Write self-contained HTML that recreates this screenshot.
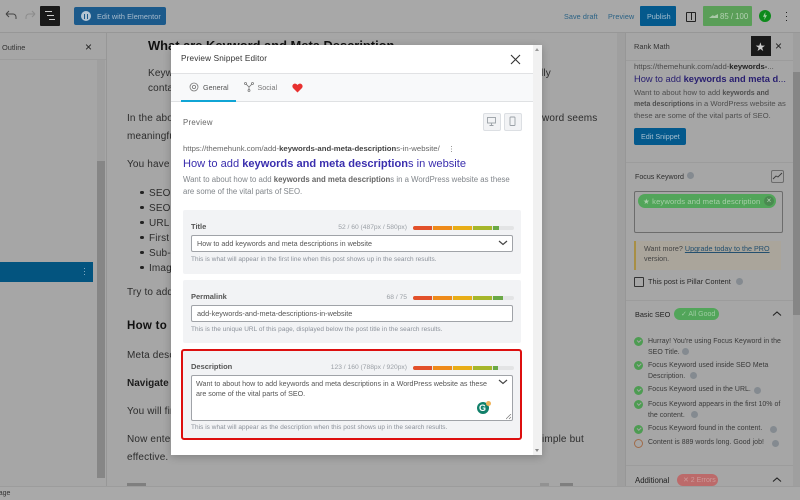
<!DOCTYPE html>
<html><head><meta charset="utf-8">
<style>
html,body{margin:0;padding:0;width:800px;height:500px;overflow:hidden;background:#a6a6a6;font-family:"Liberation Sans",sans-serif;}
.a{position:absolute;white-space:nowrap;}
#r{position:relative;width:800px;height:500px;overflow:hidden;}
.b{font-size:10px;color:#2c2c2c;letter-spacing:.15px;}
.s{font-size:6.95px;color:#3a3a3a;letter-spacing:.05px;}
.dot{position:absolute;width:9px;height:9px;border-radius:50%;background:#4d9c52;}
.dot:after{content:"";position:absolute;left:2.5px;top:2px;width:3px;height:1.6px;border-left:1.2px solid #a6a6a6;border-bottom:1.2px solid #a6a6a6;transform:rotate(-45deg);}
.q{position:absolute;width:7px;height:7px;border-radius:50%;background:#848a90;}
.panel{position:absolute;left:183px;width:338px;background:#f2f3f5;border-radius:2px;}
.lab{font-size:7.5px;font-weight:bold;color:#555;}
.inp{position:absolute;left:191px;width:320px;background:#fff;border:1px solid #a0a3a8;border-radius:2px;font-size:7.2px;color:#555;}
.hint{font-size:6.45px;color:#8a9099;letter-spacing:.05px;}
.bar{position:absolute;left:413px;width:101px;height:4px;background:#e3e4e5;border-radius:2px;overflow:hidden;}
.bar i{position:absolute;top:0;height:4px;}
.cnt{font-size:6.7px;color:#9a9fa5;text-align:right;}
</style></head><body><div id="r">

<!-- toolbar -->
<div class="a" style="left:0;top:0;width:800px;height:32px;background:#a8a8a8;border-bottom:1px solid #979797;"></div>
<svg class="a" style="left:4px;top:9px" width="14" height="14" fill="none" stroke-width="1"><path d="M2 5h7a3 3 0 0 1 3 3v2M2 5l3-3M2 5l3 3" stroke="#444"/></svg>
<svg class="a" style="left:25px;top:9px" width="12" height="14" fill="none" stroke-width="1"><path d="M10 5H4a3 3 0 0 0-3 3v2M10 5L7 2M10 5L7 8" stroke="#8c8c8c"/></svg>
<div class="a" style="left:40px;top:6px;width:20px;height:20px;background:#1a1a1a;border-radius:1px;"></div>
<div class="a" style="left:45px;top:11px;width:7px;height:1.4px;background:#ccc;"></div>
<div class="a" style="left:47px;top:15px;width:7px;height:1.4px;background:#ccc;"></div>
<div class="a" style="left:49px;top:19px;width:6px;height:1.4px;background:#ccc;"></div>
<div class="a" style="left:74px;top:7px;width:92px;height:18px;background:#1c5a8b;border-radius:2px;"></div>
<div class="a" style="left:81px;top:11px;width:10px;height:10px;border-radius:50%;background:#b5c4d2;"></div>
<div class="a" style="left:83.5px;top:13.5px;width:1.5px;height:5px;background:#1c5a8b;box-shadow:3px 0 0 #1c5a8b;"></div>
<div class="a" style="left:97px;top:12px;font-size:7.3px;color:#a9bccd;letter-spacing:.05px;">Edit with Elementor</div>
<div class="a" style="left:564px;top:12px;font-size:7.2px;color:#2a6285;letter-spacing:.1px;">Save draft</div>
<div class="a" style="left:608px;top:12px;font-size:7.2px;color:#2a6285;letter-spacing:.1px;">Preview</div>
<div class="a" style="left:640px;top:6px;width:36px;height:20px;background:#04598c;border-radius:1px;"></div>
<div class="a" style="left:647px;top:12px;font-size:7.2px;color:#a6bfd0;">Publish</div>
<div class="a" style="left:686px;top:12px;width:8px;height:8px;border:1px solid #222;border-radius:1px;"></div>
<div class="a" style="left:691px;top:12px;width:1px;height:8px;background:#222;"></div>
<div class="a" style="left:703px;top:6px;width:49px;height:20px;background:#5a9e58;border-radius:1px;"></div>
<div class="a" style="left:709px;top:14px;width:9px;height:4px;background:#a9c9a8;clip-path:polygon(0 100%,40% 30%,60% 50%,100% 0,100% 100%);"></div>
<div class="a" style="left:720px;top:12px;font-size:7.8px;color:#b4d2b3;">85 / 100</div>
<div class="a" style="left:759px;top:10px;width:12px;height:12px;border-radius:50%;background:#0e8a1c;"></div>
<div class="a" style="left:763px;top:12px;width:4px;height:8px;background:#a8d0a8;clip-path:polygon(60% 0,0 60%,45% 60%,30% 100%,100% 40%,55% 40%);"></div>
<div class="a" style="left:786px;top:12px;width:1.4px;height:1.4px;background:#222;box-shadow:0 4px 0 #222,0 8px 0 #222;"></div>

<!-- Outline sidebar -->
<div class="a" style="left:0;top:33px;width:106px;height:453px;background:#a6a6a6;border-right:1px solid #979797;"></div>
<div class="a" style="left:0;top:59px;width:106px;height:1px;background:#9c9c9c;"></div>
<div class="a" style="left:2px;top:43px;font-size:7.4px;color:#333;">Outline</div>
<div class="a" style="left:85px;top:40px;font-size:12px;color:#222;">×</div>
<div class="a" style="left:97px;top:60px;width:8px;height:418px;background:#9f9f9f;"></div>
<div class="a" style="left:97px;top:161px;width:8px;height:317px;background:#868686;"></div>
<div class="a" style="left:0;top:262px;width:93px;height:20px;background:#03547f;"></div>
<div class="a" style="left:83.5px;top:268px;width:1.2px;height:1.2px;background:#7fa8c0;box-shadow:0 3px 0 #7fa8c0,0 6px 0 #7fa8c0;"></div>

<!-- Content -->
<div class="a" style="left:148px;top:38px;font-size:12.9px;font-weight:bold;color:#111;">What are Keyword and Meta Description</div>
<div class="a b" style="left:148px;top:68px;">Keywo</div>
<div class="a b" style="left:148px;top:83px;">contai</div>
<div class="a b" style="left:541px;top:68px;">lly</div>
<div class="a b" style="left:127px;top:113px;">In the abo</div>
<div class="a b" style="left:542px;top:113px;">word seems</div>
<div class="a b" style="left:127px;top:131px;">meaningfu</div>
<div class="a b" style="left:127px;top:159px;">You have t</div>
<div class="a b" style="left:149px;top:186px;line-height:15px;white-space:pre;">SEO T
SEO I
URL
First
Sub-I
Imag</div>
<div class="a" style="left:140px;top:190.5px;width:3.5px;height:3.5px;border-radius:50%;background:#222;box-shadow:0 15px 0 #222,0 30px 0 #222,0 45px 0 #222,0 60px 0 #222,0 75px 0 #222;"></div>
<div class="a b" style="left:127px;top:287px;">Try to add</div>
<div class="a" style="left:127px;top:320px;font-size:11.5px;font-weight:bold;color:#111;letter-spacing:.3px;">How to</div>
<div class="a b" style="left:127px;top:350px;">Meta desc</div>
<div class="a" style="left:127px;top:378px;font-size:10px;font-weight:bold;color:#1c1c1c;">Navigate</div>
<div class="a b" style="left:127px;top:406px;">You will fin</div>
<div class="a b" style="left:127px;top:434px;">Now ente</div>
<div class="a b" style="left:542px;top:434px;">imple but</div>
<div class="a b" style="left:127px;top:452px;">effective.</div>
<div class="a" style="left:127px;top:483px;width:19px;height:3px;background:#7f7f7f;"></div>
<div class="a" style="left:540px;top:483px;width:9px;height:3px;background:#929292;"></div>
<div class="a" style="left:560px;top:483px;width:13px;height:3px;background:#7f7f7f;"></div>
<div class="a" style="left:617px;top:33px;width:8px;height:453px;background:#9f9f9f;"></div>

<!-- Status -->
<div class="a" style="left:0;top:486px;width:800px;height:14px;background:#a9a9a9;border-top:1px solid #9c9c9c;box-sizing:border-box;"></div>
<div class="a" style="left:-9px;top:490px;font-size:7px;color:#333;">Image</div>

<!-- Rank Math sidebar -->
<div class="a" style="left:625px;top:33px;width:175px;height:453px;background:#a6a6a6;border-left:1px solid #979797;box-sizing:border-box;"></div>
<div class="a" style="left:793px;top:33px;width:7px;height:453px;background:#9f9f9f;"></div>
<div class="a" style="left:793px;top:72px;width:7px;height:243px;background:#868686;"></div>
<div class="a" style="left:626px;top:60px;width:167px;height:1px;background:#9c9c9c;"></div>
<div class="a" style="left:634px;top:42px;font-size:7.4px;color:#333;">Rank Math</div>
<div class="a" style="left:751px;top:36px;width:20px;height:20px;background:#1a1a1a;"></div>
<div class="a" style="left:755px;top:39.5px;font-size:12px;color:#ccc;">★</div>
<div class="a" style="left:775px;top:39px;font-size:12px;color:#222;">×</div>
<div class="a" style="left:634px;top:62px;font-size:7.7px;color:#4a4a4a;">https://themehunk.com/add-<b style="color:#222">keywords-</b>...</div>
<div class="a" style="left:634px;top:74px;font-size:9.3px;color:#281e70;">How to add <b>keywords and meta d</b>...</div>
<div class="a" style="left:634px;top:88px;font-size:7.6px;line-height:10.4px;color:#4e4e4e;">Want to about how to add <b style="font-size:7px">keywords and</b><br><b style="font-size:7px">meta descriptions</b> in a WordPress website as<br>these are some of the vital parts of SEO.</div>
<div class="a" style="left:634px;top:128px;width:52px;height:17px;background:#04598c;border-radius:2px;"></div>
<div class="a" style="left:641px;top:132px;font-size:7.2px;color:#a6bfd0;">Edit Snippet</div>
<div class="a" style="left:626px;top:162px;width:167px;height:1px;background:#9c9c9c;"></div>
<div class="a" style="left:635px;top:173px;font-size:7.1px;color:#2e2e2e;">Focus Keyword</div>
<div class="q" style="left:687px;top:172px;"></div>
<div class="a" style="left:771px;top:170px;width:11px;height:11px;border:1px solid #6c6c6c;border-radius:2px;"></div>
<svg class="a" style="left:772px;top:171px" width="11" height="11" fill="none"><path d="M1 8l3-3 2 1 4-4" stroke="#3a3a3a" stroke-width=".9"/></svg>
<div class="a" style="left:634px;top:191px;width:147px;height:40px;border:1px solid #6c6c6c;border-radius:2px;"></div>
<div class="a" style="left:638px;top:194px;width:138px;height:14px;background:#52a55a;border-radius:7px;"></div>
<div class="a" style="left:643px;top:196.5px;font-size:7.6px;color:#a7cfa9;letter-spacing:.12px;">★ keywords and meta description</div>
<div class="a" style="left:764px;top:196px;width:10px;height:10px;border-radius:50%;background:#4a8a50;font-size:8px;line-height:9px;text-align:center;color:#bcd5bd;">×</div>
<div class="a" style="left:634px;top:241px;width:147px;height:29px;background:#aaa59b;"></div>
<div class="a" style="left:634px;top:241px;width:2px;height:29px;background:#a88f45;"></div>
<div class="a" style="left:644px;top:244px;font-size:7.2px;line-height:10px;color:#444;">Want more? <u style="color:#24506f">Upgrade today to the PRO</u><br>version.</div>
<div class="a" style="left:634px;top:277px;width:8px;height:8px;border:1px solid #333;border-radius:1px;"></div>
<div class="a" style="left:648px;top:277px;font-size:7.3px;color:#2a2a2a;">This post is Pillar Content</div>
<div class="q" style="left:736px;top:278px;"></div>
<div class="a" style="left:626px;top:300px;width:167px;height:1px;background:#9c9c9c;"></div>
<div class="a" style="left:635px;top:310px;font-size:7.3px;color:#222;">Basic SEO</div>
<div class="a" style="left:674px;top:308px;width:45px;height:12px;border-radius:6px;background:#52a55a;"></div>
<div class="a" style="left:681px;top:310px;font-size:7px;color:#9fcca3;">✓ All Good</div>
<svg class="a" style="left:772px;top:311px" width="10" height="6" fill="none"><path d="M1 4.5L5 1l4 3.5" stroke="#222" stroke-width="1.1"/></svg>

<div class="dot" style="left:634px;top:337px;"></div>
<div class="a s" style="left:648px;top:337px;line-height:10.5px;">Hurray! You're using Focus Keyword in the<br>SEO Title.</div>
<div class="q" style="left:682px;top:348px;"></div>
<div class="dot" style="left:634px;top:361px;"></div>
<div class="a s" style="left:648px;top:361px;line-height:10.5px;">Focus Keyword used inside SEO Meta<br>Description.</div>
<div class="q" style="left:690px;top:372px;"></div>
<div class="dot" style="left:634px;top:386px;"></div>
<div class="a s" style="left:648px;top:386px;">Focus Keyword used in the URL.</div>
<div class="q" style="left:754px;top:387px;"></div>
<div class="dot" style="left:634px;top:400px;"></div>
<div class="a s" style="left:648px;top:400px;line-height:10.5px;">Focus Keyword appears in the first 10% of<br>the content.</div>
<div class="q" style="left:691px;top:411px;"></div>
<div class="dot" style="left:634px;top:425px;"></div>
<div class="a s" style="left:648px;top:425px;">Focus Keyword found in the content.</div>
<div class="q" style="left:770px;top:426px;"></div>
<div class="a" style="left:634px;top:439px;width:7px;height:7px;border:1px solid #a06b48;border-radius:50%;"></div>
<div class="a s" style="left:648px;top:439px;">Content is 889 words long. Good job!</div>
<div class="q" style="left:772px;top:440px;"></div>
<div class="a" style="left:626px;top:465px;width:167px;height:1px;background:#9c9c9c;"></div>
<div class="a" style="left:635px;top:476px;font-size:7.8px;color:#222;">Additional</div>
<div class="a" style="left:677px;top:474px;width:41px;height:12px;border-radius:6px;background:#bc6a6a;"></div>
<div class="a" style="left:683px;top:476px;font-size:7px;color:#cc9a9a;">✕ 2 Errors</div>
<svg class="a" style="left:772px;top:477px" width="10" height="6" fill="none"><path d="M1 4.5L5 1l4 3.5" stroke="#222" stroke-width="1.1"/></svg>

<!-- Modal -->
<div class="a" style="left:171px;top:45px;width:371px;height:410px;background:#fff;box-shadow:0 2px 8px rgba(0,0,0,.22);"></div>
<div class="a" style="left:533px;top:45px;width:9px;height:410px;background:#f1f1f1;"></div>
<div class="a" style="left:171px;top:73px;width:362px;height:1px;background:#e1e2e4;"></div>
<div class="a" style="left:181px;top:54px;font-size:8.2px;color:#333;letter-spacing:.15px;">Preview Snippet Editor</div>
<svg class="a" style="left:510px;top:54px" width="11" height="11" fill="none"><path d="M1 1l9 9M10 1l-9 9" stroke="#333" stroke-width="1.1"/></svg>
<div class="a" style="left:171px;top:74px;width:362px;height:27px;background:#f8f9fa;border-bottom:1px solid #dfe1e3;"></div>
<div class="a" style="left:181px;top:100px;width:55px;height:2px;background:#10a5d5;"></div>
<svg class="a" style="left:189px;top:82px" width="10" height="10" fill="none" stroke="#777" stroke-width=".8"><circle cx="5" cy="5" r="1.6"/><circle cx="5" cy="5" r="4"/></svg>
<div class="a" style="left:203px;top:83px;font-size:7.2px;color:#555;">General</div>
<svg class="a" style="left:244px;top:82px" width="10" height="10" fill="none" stroke="#777" stroke-width=".8"><circle cx="1.5" cy="1.5" r="1"/><circle cx="8.5" cy="1.5" r="1"/><circle cx="5" cy="8.5" r="1"/><path d="M2 2l3 3 3-3M5 5v3"/></svg>
<div class="a" style="left:257.5px;top:83px;font-size:7.2px;color:#777;">Social</div>
<svg class="a" style="left:292px;top:82.5px" width="11" height="10"><path d="M5.5 9.5L1 5C-.5 3 1 .5 3 .6c1.2 0 2 .7 2.5 1.500C6 1.300 6.800.6 8 .6c2 0 3.500 2.400 2 4.400z" fill="#e8312f"/></svg>
<div class="a" style="left:183px;top:118px;font-size:7.8px;color:#666;letter-spacing:.3px;">Preview</div>
<div class="a" style="left:483px;top:113px;width:16px;height:16px;background:#f2f3f5;border:1px solid #dcdfe3;border-radius:2px;"></div>
<div class="a" style="left:504px;top:113px;width:16px;height:16px;background:#f2f3f5;border:1px solid #dcdfe3;border-radius:2px;"></div>
<svg class="a" style="left:486px;top:116px" width="12" height="12" fill="none" stroke="#9aa0a6" stroke-width=".9"><rect x="1.500" y="1.500" width="8" height="5.500"/><path d="M3.500 9.500h4M5.500 7v2.500"/></svg>
<svg class="a" style="left:509px;top:116px" width="8" height="11" fill="none" stroke="#9aa0a6" stroke-width=".9"><rect x="1" y="1" width="5" height="8.500" rx=".8"/></svg>
<div class="a" style="left:183px;top:144px;font-size:7.75px;color:#666;">https://themehunk.com/add-<b style="color:#444">keywords-and-meta-description</b>s-in-website/</div>
<div class="a" style="left:451px;top:146px;width:1.2px;height:1.2px;background:#999;box-shadow:0 2.500px 0 #999,0 5px 0 #999;"></div>
<div class="a" style="left:183px;top:158px;font-size:11.1px;color:#3a2eae;">How to add <b>keywords and meta description</b>s in website</div>
<div class="a" style="left:183px;top:174px;font-size:7.8px;line-height:12px;color:#80858a;">Want to about how to add <b style="color:#666">keywords and meta description</b>s in a WordPress website as these<br>are some of the vital parts of SEO.</div>

<!-- Title -->
<div class="panel" style="top:210px;height:64px;"></div>
<div class="a lab" style="left:191px;top:222px;">Title</div>
<div class="a cnt" style="left:300px;width:107px;top:224px;">52 / 60 (487px / 580px)</div>
<div class="bar" style="top:226px;"><i style="left:0;width:19px;background:#e2502a"></i><i style="left:20px;width:19px;background:#ee8a1a"></i><i style="left:40px;width:19px;background:#e8ad17"></i><i style="left:60px;width:19px;background:#a6b62a"></i><i style="left:80px;width:6px;background:#6aa845"></i></div>
<div class="inp" style="top:235px;height:15px;padding:0;line-height:15px;text-indent:5px;">How to add keywords and meta descriptions in website</div>
<svg class="a" style="left:498px;top:240px" width="10" height="6" fill="none"><path d="M1 1l4 3.500L9 1" stroke="#444" stroke-width="1.200"/></svg>
<div class="a hint" style="left:191px;top:256px;">This is what will appear in the first line when this post shows up in the search results.</div>

<!-- Permalink -->
<div class="panel" style="top:280px;height:63px;"></div>
<div class="a lab" style="left:191px;top:292px;">Permalink</div>
<div class="a cnt" style="left:300px;width:107px;top:293.500px;">68 / 75</div>
<div class="bar" style="top:296px;"><i style="left:0;width:19px;background:#e2502a"></i><i style="left:20px;width:19px;background:#ee8a1a"></i><i style="left:40px;width:19px;background:#e8ad17"></i><i style="left:60px;width:19px;background:#a6b62a"></i><i style="left:80px;width:10px;background:#6aa845"></i></div>
<div class="inp" style="top:305px;height:15px;line-height:15px;text-indent:5px;font-size:7.3px;">add-keywords-and-meta-descriptions-in-website</div>
<div class="a hint" style="left:191px;top:326px;">This is the unique URL of this page, displayed below the post title in the search results.</div>

<!-- Description -->
<div class="a" style="left:181px;top:349px;width:337px;height:87px;background:#f2f3f5;border:2px solid #dd0f0f;border-radius:3px;"></div>
<div class="a lab" style="left:191px;top:362px;">Description</div>
<div class="a cnt" style="left:280px;width:127px;top:364px;">123 / 160 (788px / 920px)</div>
<div class="bar" style="top:366px;"><i style="left:0;width:19px;background:#e2502a"></i><i style="left:20px;width:19px;background:#ee8a1a"></i><i style="left:40px;width:19px;background:#e8ad17"></i><i style="left:60px;width:19px;background:#a6b62a"></i><i style="left:80px;width:5px;background:#6aa845"></i></div>
<div class="inp" style="top:375px;height:44px;"></div>
<div class="a" style="left:196px;top:379px;font-size:7.150px;line-height:10px;color:#555;">Want to about how to add keywords and meta descriptions in a WordPress website as these<br>are some of the vital parts of SEO.</div>
<svg class="a" style="left:498px;top:379px" width="10" height="6" fill="none"><path d="M1 1l4 3.500L9 1" stroke="#444" stroke-width="1.200"/></svg>
<div class="a" style="left:477px;top:402px;width:12px;height:12px;border-radius:50%;background:#11806a;"></div>
<div class="a" style="left:479px;top:403px;font-size:9px;font-weight:bold;color:#fff;">G</div>
<div class="a" style="left:486px;top:401px;width:5px;height:5px;border-radius:50%;background:#f0b45a;"></div>
<svg class="a" style="left:506px;top:414px" width="6" height="6" fill="none"><path d="M5 0L0 5M5 3L3 5" stroke="#777" stroke-width=".7"/></svg>
<div class="a hint" style="left:191px;top:424px;">This is what will appear as the description when this post shows up in the search results.</div>

<div class="a" style="left:535px;top:48px;width:0;height:0;border:2.500px solid transparent;border-bottom:3px solid #999;border-top:0;"></div>
<div class="a" style="left:535px;top:449px;width:0;height:0;border:2.500px solid transparent;border-top:3px solid #888;border-bottom:0;"></div>
</div></body></html>
